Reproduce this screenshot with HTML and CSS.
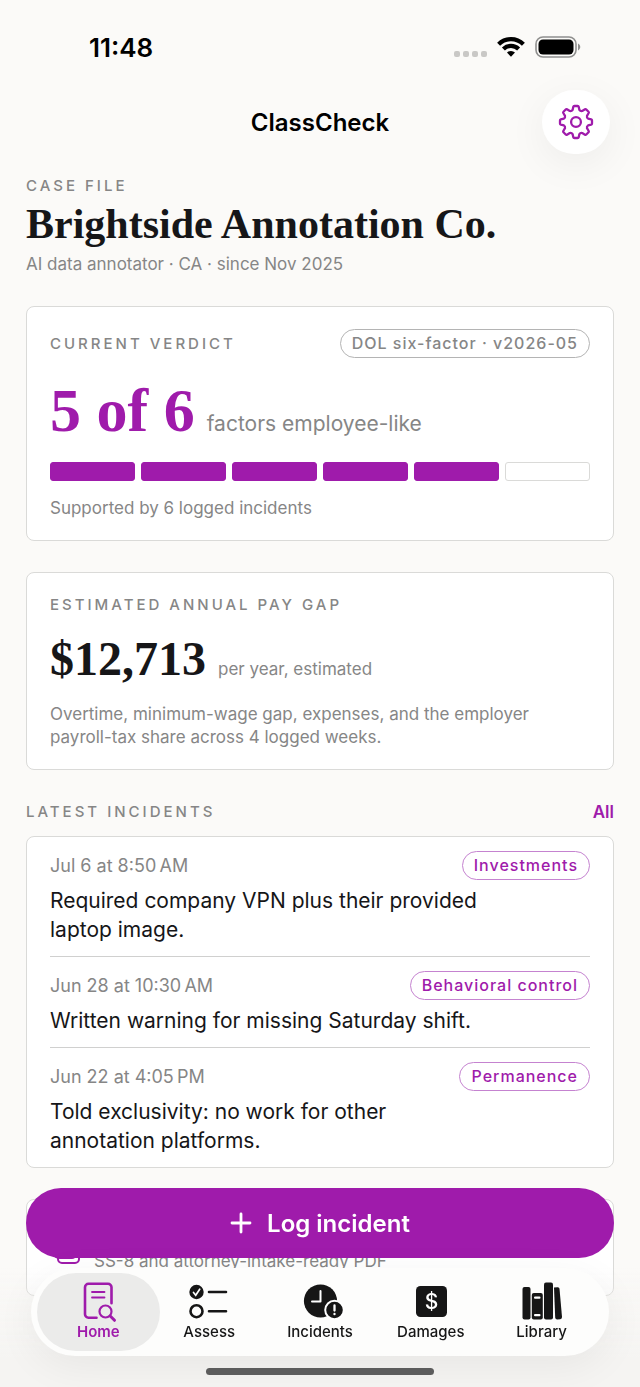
FILE: index.html
```html
<!DOCTYPE html>
<html lang="en">
<head>
    <meta charset="UTF-8">
    <meta name="viewport" content="width=device-width, initial-scale=1.0">
    <title>ClassCheck</title>
    <link rel="stylesheet" href="styles.css">
</head>
<body>
    <!-- Status bar -->
    <div class="status-bar">
        <span class="time">11:48</span>
        <div class="status-icons">
            <svg width="33" height="22" viewBox="0 0 33 22" fill="#c9c8c6">
                <rect x="0" y="15" width="6" height="6" rx="2"/>
                <rect x="9" y="15" width="6" height="6" rx="2"/>
                <rect x="18" y="15" width="6" height="6" rx="2"/>
                <rect x="27" y="15" width="6" height="6" rx="2"/>
            </svg>
            <svg width="28" height="22" viewBox="0 0 28 22" fill="none" stroke="#000" stroke-width="4.2">
                <path d="M1.6 8.2a17.6 17.6 0 0 1 24.8 0"/>
                <path d="M6.4 13a10.8 10.8 0 0 1 15.2 0"/>
                <path d="M14 20.8l-4-4.2a5.8 5.8 0 0 1 8 0z" fill="#000" stroke="none"/>
            </svg>
            <svg width="46" height="22" viewBox="0 0 46 22">
                <rect x="1" y="1" width="40" height="20" rx="7" fill="none" stroke="#8f8f8e" stroke-width="1.6"/>
                <rect x="3.5" y="3.5" width="35" height="15" rx="4.5" fill="#000"/>
                <path d="M43 7.6c3 1.4 3 5.4 0 6.8z" fill="#8f8f8e"/>
            </svg>
        </div>
    </div>

    <!-- Navigation -->
    <header class="nav">
        <span class="nav-title">ClassCheck</span>
        <button type="button" class="btn-settings" aria-label="Settings">
            <svg width="36" height="36" viewBox="-18 -18 36 36" fill="none" stroke="#9f1bab" stroke-width="2.3" stroke-linejoin="round">
                <path d="M-1.6 -16L1.6 -16Q2.5 -16 2.7 -15.2L3.4 -12.1A2.6 2.6 0 0 0 6.2 -11L9 -12.7Q9.7 -13.1 10.300 -12.500L12.500 -10.300Q13.1 -9.7 12.700 -9L11 -6.2A2.6 2.6 0 0 0 12.1 -3.4L15.2 -2.7Q16 -2.5 16 -1.6L16 1.6Q16 2.5 15.2 2.7L12.1 3.4A2.6 2.6 0 0 0 11 6.2L12.7 9Q13.1 9.7 12.500 10.300L10.300 12.500Q9.7 13.1 9 12.700L6.2 11A2.6 2.6 0 0 0 3.4 12.1L2.7 15.2Q2.5 16 1.6 16L-1.6 16Q-2.5 16 -2.7 15.2L-3.4 12.1A2.6 2.6 0 0 0 -6.2 11L-9 12.7Q-9.7 13.1 -10.300 12.500L-12.500 10.300Q-13.1 9.7 -12.700 9L-11 6.2A2.6 2.6 0 0 0 -12.1 3.4L-15.2 2.7Q-16 2.5 -16 1.6L-16 -1.6Q-16 -2.5 -15.2 -2.7L-12.1 -3.4A2.6 2.6 0 0 0 -11 -6.2L-12.7 -9Q-13.1 -9.7 -12.500 -10.300L-10.300 -12.500Q-9.7 -13.1 -9 -12.700L-6.2 -11A2.6 2.6 0 0 0 -3.4 -12.1L-2.7 -15.2Q-2.5 -16 -1.6 -16Z"/>
                <circle r="4.9"/>
            </svg>
        </button>
    </header>

    <main>
        <!-- Case file -->
        <div class="eyebrow">CASE FILE</div>
        <h1>Brightside Annotation Co.</h1>
        <p class="note">AI data annotator · CA · since Nov 2025</p>

        <!-- Verdict -->
        <section class="card verdict">
            <div class="row">
                <h2 class="eyebrow">CURRENT VERDICT</h2>
                <span class="pill">DOL six-factor · v2026-05</span>
            </div>
            <div class="figure">
                <strong class="score">5 of 6</strong>
                <span class="score-unit">factors employee-like</span>
            </div>
            <div class="segments">
                <span class="on"></span>
                <span class="on"></span>
                <span class="on"></span>
                <span class="on"></span>
                <span class="on"></span>
                <span></span>
            </div>
            <p class="note">Supported by 6 logged incidents</p>
        </section>

        <!-- Pay gap -->
        <section class="card pay-gap">
            <h2 class="eyebrow">ESTIMATED ANNUAL PAY GAP</h2>
            <div class="figure">
                <strong class="amount">$12,713</strong>
                <span class="note">per year, estimated</span>
            </div>
            <p class="note">Overtime, minimum-wage gap, expenses, and the employer payroll-tax share across 4 logged weeks.</p>
        </section>

        <!-- Incidents -->
        <div class="row section-head">
            <h2 class="eyebrow">LATEST INCIDENTS</h2>
            <a href="#incidents" class="link-all">All</a>
        </div>
        <ul class="card incidents" id="incidents">
            <li>
                <div class="row">
                    <span class="date">Jul 6 at 8:50&#8239;AM</span>
                    <span class="pill pill-accent">Investments</span>
                </div>
                <p class="summary">Required company VPN plus their provided laptop image.</p>
            </li>
            <li>
                <div class="row">
                    <span class="date">Jun 28 at 10:30&#8239;AM</span>
                    <span class="pill pill-accent">Behavioral control</span>
                </div>
                <p class="summary">Written warning for missing Saturday shift.</p>
            </li>
            <li>
                <div class="row">
                    <span class="date">Jun 22 at 4:05&#8239;PM</span>
                    <span class="pill pill-accent">Permanence</span>
                </div>
                <p class="summary">Told exclusivity: no work for other<br>annotation platforms.</p>
            </li>
        </ul>

        <!-- Export -->
        <section class="card export">
            <svg width="28" height="34" viewBox="0 0 28 34" fill="none" stroke="#9f1bab" stroke-width="2">
                <path d="M5 27.500a4 4 0 0 1-4-4V10a4 4 0 0 1 4-4h14a4 4 0 0 1 4 4"/>
                <path d="M2 25.500q1.500 2.500 5 2.500h12q2.500 0 3-3"/>
                <path d="M5 27v2a4 4 0 0 0 4 4h13a4 4 0 0 0 4-4v-4"/>
            </svg>
            <span class="note">SS-8 and attorney-intake-ready PDF</span>
        </section>
    </main>

    <!-- Floating button and tabs -->
    <div class="dock">
        <button type="button" class="btn-log">
            <svg width="22" height="22" viewBox="0 0 22 22" stroke="#fff" stroke-width="2.8" stroke-linecap="round">
                <path d="M11 2v18M2 11h18"/>
            </svg>
            Log incident
        </button>
        <nav class="tabs">
            <a href="#home" class="tab active">
                <svg width="40" height="40" viewBox="0 0 40 40" fill="none" stroke="#9f1bab" stroke-width="2.6" stroke-linecap="round">
                    <path d="M18.500 35.700H10.500a3.500 3.500 0 0 1-3.500-3.500V5.300a3.500 3.500 0 0 1 3.500-3.500h19.500a3.500 3.500 0 0 1 3.500 3.500v16"/>
                    <path d="M14 10h12.500M14 15.500h12.500" stroke-width="1.800"/>
                    <circle cx="27.500" cy="29.500" r="6" stroke-width="2.200"/>
                    <path d="M32.200 34l4.300 4.300" stroke-width="3"/>
                </svg>
                Home
            </a>
            <a href="#assess" class="tab">
                <svg width="40" height="40" viewBox="0 0 40 40" fill="none" stroke="#161616" stroke-width="2.600" stroke-linecap="round">
                    <circle cx="7.500" cy="10" r="7.200" fill="#161616" stroke="none"/>
                    <path d="M4.500 10.500l2.200 2.700 4-6" stroke="#fff" stroke-width="1.700"/>
                    <circle cx="7.500" cy="29.200" r="6"/>
                    <path d="M20 10h17M20 29.200h17"/>
                </svg>
                Assess
            </a>
            <a href="#incidents" class="tab">
                <svg width="40" height="40" viewBox="0 0 40 40" fill="none" stroke="#fff" stroke-width="2" stroke-linecap="round" stroke-linejoin="round">
                    <circle cx="20.500" cy="19" r="16.600" fill="#161616" stroke="none"/>
                    <path d="M20.500 9v10.500H12"/>
                    <circle cx="34.500" cy="28" r="9.300" fill="#161616"/>
                    <path d="M34.500 23.500v5M34.500 32v.200" stroke-width="2.300"/>
                </svg>
                Incidents
            </a>
            <a href="#damages" class="tab">
                <svg width="40" height="40" viewBox="0 0 40 40">
                    <rect x="5" y="4" width="31" height="31" rx="4.500" fill="#161616"/>
                    <text x="20.500" y="27" class="dollar">$</text>
                </svg>
                Damages
            </a>
            <a href="#library" class="tab">
                <svg width="40" height="40" viewBox="0 0 40 40" fill="#161616">
                    <rect x="0.500" y="5" width="8" height="32.500" rx="2"/>
                    <rect x="9.800" y="11" width="11" height="26.500" rx="2"/>
                    <rect x="12" y="14.500" width="6.500" height="2.200" rx="1" fill="#fff"/>
                    <rect x="12" y="32" width="6.500" height="2.200" rx="1" fill="#fff"/>
                    <rect x="22" y="0.500" width="9" height="37" rx="2"/>
                    <path d="M32 5.600l3.500-.400q1.800-.200 2 1.600l2.500 28.200q.100 2-1.800 2.200l-3 .300q-1.800 0-2-1.800z"/>
                </svg>
                Library
            </a>
        </nav>
        <div class="home-indicator"></div>
    </div>
</body>
</html>
```
FILE: styles.css
```css
* {
    box-sizing: border-box;
}
body {
    font-family: Inter, "Liberation Sans", sans-serif;
    margin: 0;
    padding: 0 0 90px;
    background: #fbfaf8;
    color: #161618;
}
h1, h2, p, ul {
    margin: 0;
    padding: 0;
}
svg {
    display: block;
    flex: none;
    overflow: visible;
}
.status-bar {
    display: flex;
    justify-content: space-between;
    align-items: center;
    height: 90px;
    padding: 4px 59px 0 89px;
}
.time {
    font-size: 26px;
    font-weight: 600;
    color: #000;
}
.status-icons {
    display: flex;
    gap: 10px;
}
.nav {
    display: grid;
    grid-template-columns: 1fr auto 1fr;
    align-items: center;
    padding: 0 30px;
}
.nav-title {
    grid-column: 2;
    font-size: 24px;
    font-weight: 600;
    color: #000;
}
.btn-settings {
    display: flex;
    justify-content: center;
    align-items: center;
    justify-self: end;
    width: 68px;
    height: 64px;
    padding: 0;
    border: none;
    border-radius: 34px;
    background: #fff;
    box-shadow: 0 10px 40px rgba(0,0,0,0.06);
    cursor: pointer;
}
main {
    padding: 22px 26px 0;
}
.eyebrow {
    font-size: 15px;
    font-weight: 500;
    line-height: 20px;
    letter-spacing: 3px;
    color: #868686;
}
h1 {
    font-family: "Liberation Serif", serif;
    font-size: 42px;
    line-height: 57px;
}
.note {
    font-size: 17px;
    line-height: 23px;
    color: #868686;
}
.card {
    margin-top: 31px;
    padding: 22px 23px 20px;
    background: #fff;
    border: 1px solid #dadad8;
    border-radius: 8px;
}
.row {
    display: flex;
    justify-content: space-between;
    align-items: center;
}
.pill {
    height: 29px;
    padding: 0 11px;
    border: 1px solid #b4b4b4;
    border-radius: 15px;
    font-size: 16px;
    font-weight: 500;
    line-height: 27px;
    letter-spacing: 1px;
    color: #868686;
}
.pill-accent {
    border-color: #c583d0;
    color: #9f1bab;
}
.figure {
    display: flex;
    align-items: baseline;
    gap: 12px;
}
.verdict, .pay-gap {
    display: flex;
    flex-direction: column;
    gap: 16px;
}
.verdict {
    margin-top: 30px;
}
.pay-gap {
    gap: 12px;
}
.score, .amount {
    font-family: "Liberation Serif", serif;
}
.score {
    font-size: 62px;
    line-height: 72px;
    color: #9f1bab;
}
.score-unit {
    font-size: 21px;
    color: #868686;
}
.amount {
    font-size: 48px;
    line-height: 64px;
}
.segments {
    display: grid;
    grid-template-columns: repeat(6, 1fr);
    gap: 6px;
}
.segments span {
    height: 19px;
    border: 1px solid #dadad8;
    border-radius: 3px;
}
.segments .on {
    background: #9f1bab;
    border-color: #9f1bab;
}
.section-head {
    margin-top: 32px;
}
.link-all {
    font-size: 17px;
    font-weight: 600;
    line-height: 20px;
    color: #9f1bab;
    text-decoration: none;
}
.incidents {
    margin-top: 14px;
    padding: 0 23px;
    list-style: none;
}
.incidents li {
    padding: 14px 0 12px;
}
.incidents li + li {
    border-top: 1px solid #d0d0cf;
}
.date {
    font-size: 18px;
    line-height: 23px;
    color: #868686;
}
.summary {
    max-width: 460px;
    padding-top: 6px;
    font-size: 21px;
    line-height: 29px;
}
.export {
    display: flex;
    align-items: flex-end;
    gap: 13px;
    height: 97px;
    padding: 22px 26px;
}
.export svg {
    margin-bottom: 9px;
}
.dock {
    position: fixed;
    left: 0;
    right: 0;
    bottom: 0;
    padding: 0 26px 12px;
    background: linear-gradient(rgba(246,245,243,0) 40%, #f5f4f2 85%);
}
.btn-log {
    display: flex;
    justify-content: center;
    align-items: center;
    gap: 15px;
    width: 100%;
    height: 70px;
    border: none;
    border-radius: 35px;
    background: #9f1bab;
    color: #fff;
    font-family: inherit;
    font-size: 24px;
    font-weight: 600;
    cursor: pointer;
}
.tabs {
    display: grid;
    grid-template-columns: repeat(5, 1fr);
    height: 88px;
    margin: 10px 5px 12px;
    padding: 5px 12px;
    border-radius: 44px;
    background: #fdfdfc;
    box-shadow: 0 10px 40px rgba(0,0,0,0.06);
}
.tab {
    display: flex;
    flex-direction: column;
    align-items: center;
    gap: 1px;
    padding-top: 9px;
    border-radius: 39px;
    font-size: 15px;
    font-weight: 500;
    line-height: 18px;
    color: #161616;
    text-decoration: none;
}
.tab.active {
    margin: 0 -6px;
    background: #ebebea;
    color: #9f1bab;
    font-weight: 600;
}
.dollar {
    fill: #fff;
    font-size: 21px;
    font-weight: 500;
    text-anchor: middle;
}
.home-indicator {
    width: 228px;
    height: 7px;
    margin: 0 auto;
    border-radius: 4px;
    background: #5c5c5c;
}
```
